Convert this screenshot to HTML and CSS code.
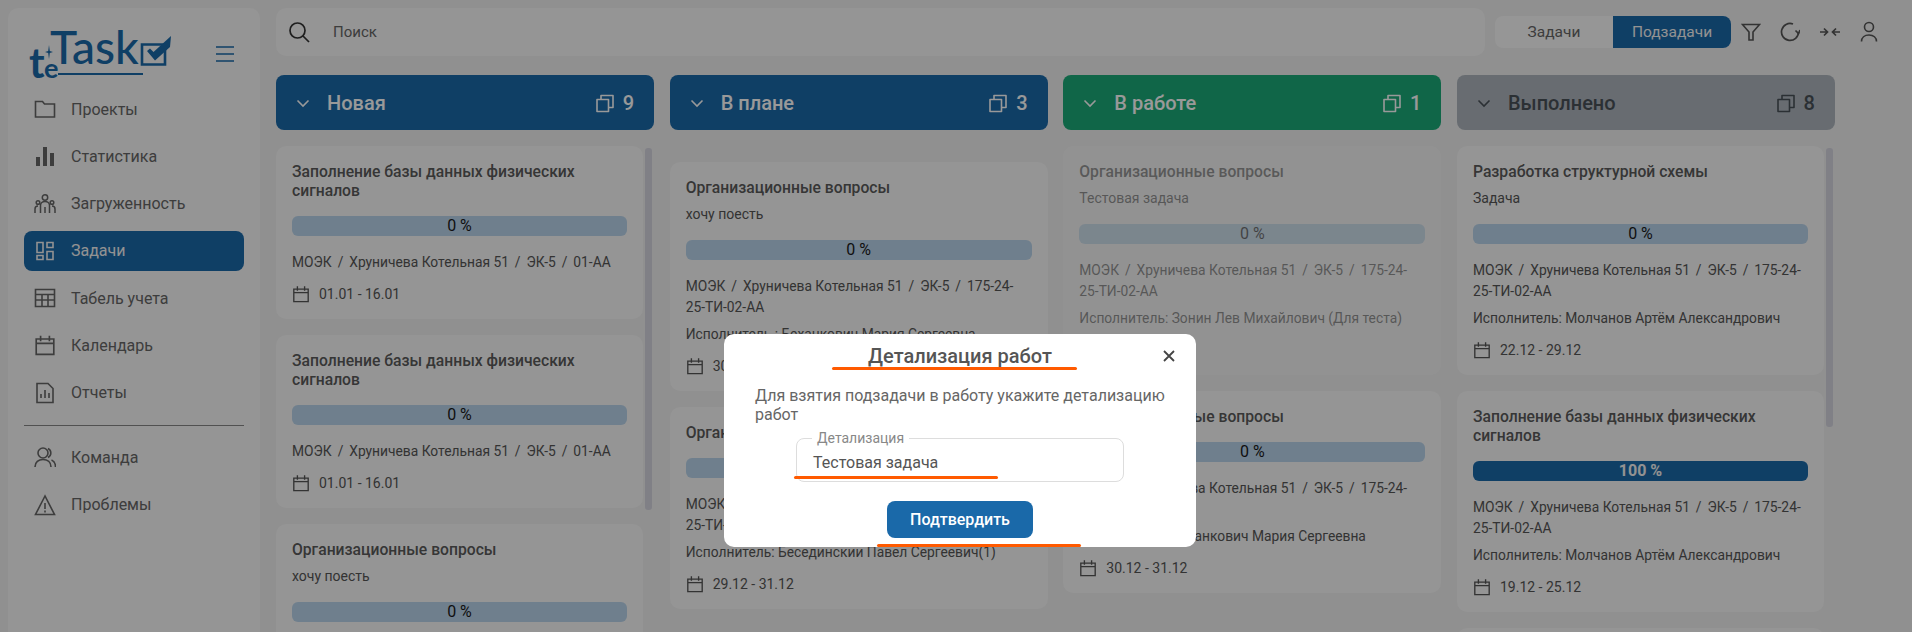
FILE: index.html
```html
<!DOCTYPE html>
<html lang="ru">
<head>
    <meta charset="UTF-8">
    <title>teTask</title>
    <link rel="stylesheet" href="styles.css">
</head>
<body>
<svg class="sprite" width="0" height="0">
    <symbol id="i-copy" viewBox="0 0 20 20"><path d="M2 6.500h11.500v12H2zM6 6.500V2.500h12v12h-4.500" fill="none" stroke="currentColor" stroke-width="1.600" stroke-linejoin="round"/></symbol>
    <symbol id="i-cal" viewBox="0 0 20 20"><path d="M2 4.500h16v14H2zM2 8.500h16M6 1.500v5M14 1.500v5" fill="none" stroke="currentColor" stroke-width="1.500"/></symbol>
    <symbol id="i-down" viewBox="0 0 14 14"><path d="M1.500 4.500 7 10l5.500-5.500" fill="none" stroke="currentColor" stroke-width="1.600"/></symbol>
</svg>

<div class="app">
    <aside class="sidebar">
        <div class="logo-row">
            <div class="logo">
                <span class="logo-t">t</span>
                <span class="logo-e">e</span>
                <span class="logo-task">Task</span>
                <svg class="logo-check" width="32" height="32" viewBox="0 0 32 32"><path d="M2 9.500h23v20H2z" fill="none" stroke="#1a69a9" stroke-width="2.600"/><path d="M7 16l3-2.500 3.500 3.500L31 1l-1 11-15 13.500z" fill="#1a69a9"/></svg>
                <svg class="logo-star" width="8" height="14" viewBox="0 0 8 14"><path d="M4 0l.8 6L8 7l-3.200 1L4 14l-.8-6L0 7l3.200-1z" fill="#1a69a9"/></svg>
            </div>
            <svg class="burger" width="18" height="16" viewBox="0 0 18 16"><path d="M0 1h18M0 8h18M0 15h18" stroke="#1a69a9" stroke-width="1.500"/></svg>
        </div>
        <nav class="nav">
            <a class="nav-item"><svg width="22" height="22" viewBox="0 0 22 22"><path d="M1.500 3.500h7l2 2.500h10v13h-19z" fill="none" stroke="currentColor" stroke-width="1.600"/></svg>Проекты</a>
            <a class="nav-item"><svg width="22" height="22" viewBox="0 0 22 22"><path d="M2 12h4v9H2zM9 2h4v19H9zM16 8h4v13h-4z" fill="currentColor"/></svg>Статистика</a>
            <a class="nav-item"><svg width="22" height="22" viewBox="0 0 22 22" fill="none" stroke="currentColor" stroke-width="1.500"><circle cx="11" cy="4.500" r="2.700"/><circle cx="4" cy="9.500" r="1.800"/><circle cx="18" cy="9.500" r="1.800"/><path d="M6.500 20v-7.500a4.500 4 0 0 1 9 0V20M11 14v6M1 20v-4a3 3 0 0 1 3-3M21 20v-4a3 3 0 0 0-3-3"/></svg>Загруженность</a>
            <a class="nav-item nav-item--active"><svg width="22" height="22" viewBox="0 0 22 22" fill="none" stroke="currentColor" stroke-width="1.600"><path d="M3 2.500h6v10H3zM13 2.500h6v5h-6zM13 11.500h6v8h-6zM3 15.500h6v4H3z"/></svg>Задачи</a>
            <a class="nav-item"><svg width="22" height="22" viewBox="0 0 22 22" fill="none" stroke="currentColor" stroke-width="1.600"><path d="M1.500 2.500h19v17h-19zM1.500 7.500h19M1.500 13h19M8 7.500v12M14 7.500v12"/></svg>Табель учета</a>
            <a class="nav-item"><svg width="22" height="22" viewBox="0 0 20 20"><use href="#i-cal"/></svg>Календарь</a>
            <a class="nav-item"><svg width="22" height="22" viewBox="0 0 22 22" fill="none" stroke="currentColor" stroke-width="1.600"><path d="M3 1.500h11l5 5v14H3z"/><path d="M7 16v-4M11 16V8M15 16v-5"/></svg>Отчеты</a>
            <hr class="nav-line">
            <a class="nav-item"><svg width="22" height="22" viewBox="0 0 22 22" fill="none" stroke="currentColor" stroke-width="1.600"><circle cx="9" cy="7" r="5"/><path d="M1 21c0-5 3.500-7.500 8-7.500s8 2.500 8 7.500M14 2.500a5 5 0 0 1 0 9M17.500 14c2.500 1 4 3.500 4 7"/></svg>Команда</a>
            <a class="nav-item"><svg width="22" height="22" viewBox="0 0 22 22" fill="none" stroke="currentColor" stroke-width="1.600"><path d="M11 2 1.500 20.500h19zM11 9v6M11 16.500v2"/></svg>Проблемы</a>
        </nav>
    </aside>

    <main class="main">
        <header class="topbar">
            <div class="search">
                <svg width="22" height="22" viewBox="0 0 22 22" fill="none" stroke="#333" stroke-width="1.700"><circle cx="9.500" cy="9.500" r="7.500"/><path d="m15 15 6 6"/></svg>
                <span>Поиск</span>
            </div>
            <div class="toggle">
                <span class="toggle-btn">Задачи</span>
                <span class="toggle-btn toggle-btn--on">Подзадачи</span>
            </div>
            <div class="tools">
                <svg width="20" height="20" viewBox="0 0 20 20" fill="none" stroke="currentColor" stroke-width="1.600"><path d="M1.500 2.500h17L12 10v8H8v-8z"/></svg>
                <svg width="20" height="20" viewBox="0 0 20 20" fill="none" stroke="currentColor" stroke-width="1.700"><path d="M18.500 10A8.500 8.500 0 1 1 13 2"/><path d="M15.500 8.500l3 3 1.500-3.500"/></svg>
                <svg width="22" height="12" viewBox="0 0 22 12" fill="none" stroke="currentColor" stroke-width="1.700"><path d="M1 6h7M5 2.500 8.500 6 5 9.500M21 6h-7M17 2.500 13.500 6l3.500 3.500"/></svg>
                <svg width="18" height="22" viewBox="0 0 18 22" fill="none" stroke="currentColor" stroke-width="1.600"><circle cx="9" cy="6" r="4.500"/><path d="M1.500 20.500c0-4 3-6.500 7.500-6.500s7.500 2.500 7.500 6.500"/></svg>
            </div>
        </header>

        <div class="board">
            <section class="col">
                <div class="col-head col-head--blue"><svg width="14" height="14"><use href="#i-down"/></svg><span class="col-name">Новая</span><svg class="col-copy" width="20" height="20"><use href="#i-copy"/></svg><span class="col-num">9</span></div>
                <div class="col-list col-list--scroll">
                    <article class="card"><h3>Заполнение базы данных физических сигналов</h3><div class="bar">0 %</div><p class="crumb">МОЭК <i>/</i> Хруничева Котельная 51 <i>/</i> ЭК-5 <i>/</i> 01-АА</p><p class="date"><svg width="18" height="18"><use href="#i-cal"/></svg>01.01 - 16.01</p></article>
                    <article class="card"><h3>Заполнение базы данных физических сигналов</h3><div class="bar">0 %</div><p class="crumb">МОЭК <i>/</i> Хруничева Котельная 51 <i>/</i> ЭК-5 <i>/</i> 01-АА</p><p class="date"><svg width="18" height="18"><use href="#i-cal"/></svg>01.01 - 16.01</p></article>
                    <article class="card"><h3>Организационные вопросы</h3><p class="sub">хочу поесть</p><div class="bar">0 %</div></article>
                    <div class="scrollbar scrollbar--long"></div>
                </div>
            </section>

            <section class="col">
                <div class="col-head col-head--blue"><svg width="14" height="14"><use href="#i-down"/></svg><span class="col-name">В плане</span><svg class="col-copy" width="20" height="20"><use href="#i-copy"/></svg><span class="col-num">3</span></div>
                <div class="col-list col-list--low">
                    <article class="card"><h3>Организационные вопросы</h3><p class="sub">хочу поесть</p><div class="bar">0 %</div><p class="crumb">МОЭК <i>/</i> Хруничева Котельная 51 <i>/</i> ЭК-5 <i>/</i> 175-24-<wbr>25-ТИ-02-АА</p><p class="who">Исполнитель : Беханкович Мария Сергеевна</p><p class="date"><svg width="18" height="18"><use href="#i-cal"/></svg>30.12 - 31.12</p></article>
                    <article class="card"><h3>Организационные вопросы</h3><div class="bar">0 %</div><p class="crumb">МОЭК <i>/</i> Хруничева Котельная 51 <i>/</i> ЭК-5 <i>/</i> 175-24-<wbr>25-ТИ-02-АА</p><p class="who">Исполнитель: Бесединскии Павел Сергеевич(1)</p><p class="date"><svg width="18" height="18"><use href="#i-cal"/></svg>29.12 - 31.12</p></article>
                </div>
            </section>

            <section class="col">
                <div class="col-head col-head--green"><svg width="14" height="14"><use href="#i-down"/></svg><span class="col-name">В работе</span><svg class="col-copy" width="20" height="20"><use href="#i-copy"/></svg><span class="col-num">1</span></div>
                <div class="col-list">
                    <article class="card card--faded"><h3>Организационные вопросы</h3><p class="sub">Тестовая задача</p><div class="bar">0 %</div><p class="crumb">МОЭК <i>/</i> Хруничева Котельная 51 <i>/</i> ЭК-5 <i>/</i> 175-24-<wbr>25-ТИ-02-АА</p><p class="who">Исполнитель: Зонин Лев Михайлович (Для теста)</p><p class="date"><svg width="18" height="18"><use href="#i-cal"/></svg>30.12 - 31.12</p></article>
                    <article class="card"><h3>Организационные вопросы</h3><div class="bar">0 %</div><p class="crumb">МОЭК <i>/</i> Хруничева Котельная 51 <i>/</i> ЭК-5 <i>/</i> 175-24-<wbr>25-ТИ-02-АА</p><p class="who">Исполнитель: Беханкович Мария Сергеевна</p><p class="date"><svg width="18" height="18"><use href="#i-cal"/></svg>30.12 - 31.12</p></article>
                </div>
            </section>

            <section class="col">
                <div class="col-head col-head--grey"><svg width="14" height="14"><use href="#i-down"/></svg><span class="col-name">Выполнено</span><svg class="col-copy" width="20" height="20"><use href="#i-copy"/></svg><span class="col-num">8</span></div>
                <div class="col-list col-list--scroll">
                    <article class="card"><h3>Разработка структурной схемы</h3><p class="sub">Задача</p><div class="bar">0 %</div><p class="crumb">МОЭК <i>/</i> Хруничева Котельная 51 <i>/</i> ЭК-5 <i>/</i> 175-24-<wbr>25-ТИ-02-АА</p><p class="who">Исполнитель: Молчанов Артём Александрович</p><p class="date"><svg width="18" height="18"><use href="#i-cal"/></svg>22.12 - 29.12</p></article>
                    <article class="card"><h3>Заполнение базы данных физических сигналов</h3><div class="bar bar--full">100 %</div><p class="crumb">МОЭК <i>/</i> Хруничева Котельная 51 <i>/</i> ЭК-5 <i>/</i> 175-24-<wbr>25-ТИ-02-АА</p><p class="who">Исполнитель: Молчанов Артём Александрович</p><p class="date"><svg width="18" height="18"><use href="#i-cal"/></svg>19.12 - 25.12</p></article>
                    <article class="card card--next"></article>
                    <div class="scrollbar"></div>
                </div>
            </section>
        </div>
    </main>
</div>

<div class="overlay">
    <div class="modal">
        <div class="modal-head">
            <h2>Детализация работ</h2>
            <svg class="modal-close" width="12" height="12" viewBox="0 0 12 12"><path d="M1 1l10 10M11 1 1 11" stroke="#444" stroke-width="1.800"/></svg>
        </div>
        <p class="modal-text">Для взятия подзадачи в работу укажите детализацию работ</p>
        <fieldset class="field">
            <legend>Детализация</legend>
            <span>Тестовая задача</span>
        </fieldset>
        <button class="confirm">Подтвердить</button>
        <i class="mark mark--title"></i>
        <i class="mark mark--field"></i>
        <i class="mark mark--button"></i>
    </div>
</div>
</body>
</html>
```

FILE: styles.css
```css
* {
    box-sizing: border-box;
}
html, body {
    height: 100%;
}
body {
    margin: 0;
    overflow: hidden;
    font-family: Roboto, "Liberation Sans", sans-serif;
    background: #f0f0f0;
    color: #555;
}
h2, h3, p {
    margin: 0;
}
.sprite {
    position: absolute;
}

.app {
    display: flex;
    height: 100vh;
    padding: 8px 0 0 8px;
    gap: 16px;
}
.sidebar {
    flex: 0 0 252px;
    background: #f8f8f8;
    border-radius: 10px 10px 0 0;
    padding: 0 16px;
}
.logo-row {
    display: flex;
    align-items: center;
    justify-content: space-between;
    height: 81px;
    padding: 11px 10px 0 5px;
}
.logo {
    position: relative;
    width: 143px;
    height: 48px;
    color: #1a69a9;
    font-family: Lato, sans-serif;
    line-height: 1;
}
.logo span {
    position: absolute;
}
.logo-t {
    left: 0;
    top: 11px;
    font-size: 42px;
    font-weight: 700;
}
.logo-e {
    left: 15px;
    top: 24px;
    font-size: 27px;
    font-weight: 700;
}
.logo-task {
    left: 21px;
    top: -6px;
    padding: 0 4px 0 0;
    font-size: 46px;
    font-weight: 500;
}
.logo-task::after {
    content: "";
    position: absolute;
    left: 8px;
    right: 0;
    bottom: -5px;
    height: 2px;
    background: #1a69a9;
}
.logo-check {
    position: absolute;
    left: 111px;
    top: 5px;
}
.logo-star {
    position: absolute;
    left: 16px;
    top: 15px;
}
.nav {
    display: flex;
    flex-direction: column;
    gap: 7.300px;
}
.nav-item {
    display: flex;
    align-items: center;
    gap: 15px;
    height: 40px;
    padding: 0 10px;
    font-size: 16px;
    color: #666;
    border-radius: 8px;
}
.nav-item--active {
    background: #1a69a9;
    color: #f4f4f4;
}
.nav-line {
    width: 100%;
    margin: 5px 0 4px;
    border: none;
    border-top: 1px solid #888;
}

.main {
    flex: 1;
    min-width: 0;
    display: flex;
    flex-direction: column;
}
.topbar {
    flex: none;
    display: flex;
    align-items: center;
    height: 48px;
    margin-bottom: 19px;
    padding-right: 28px;
}
.search {
    display: flex;
    align-items: center;
    gap: 23px;
    width: 1209px;
    height: 48px;
    padding-left: 12px;
    background: #f8f8f8;
    border-radius: 10px;
    font-size: 15px;
    color: #666;
}
.toggle {
    display: flex;
    height: 32px;
    margin-left: 10px;
    background: #fafafa;
    border-radius: 8px;
    overflow: hidden;
    font-size: 15.500px;
}
.toggle-btn {
    display: flex;
    align-items: center;
    justify-content: center;
    width: 118px;
    color: #666;
}
.toggle-btn--on {
    background: #1a69a9;
    color: #f4f4f4;
}
.tools {
    display: flex;
    align-items: center;
    gap: 19px;
    margin-left: 10px;
    color: #555;
}

.board {
    flex: 1;
    min-height: 0;
    display: flex;
    gap: 15.670px;
}
.col {
    flex: 0 0 378px;
    display: flex;
    flex-direction: column;
}
.col-head {
    flex: none;
    display: flex;
    align-items: center;
    height: 55px;
    padding: 0 20px;
    border-radius: 8px;
    color: #fff;
}
.col-head--blue {
    background: #1a69a9;
}
.col-head--green {
    background: #1baa78;
}
.col-head--grey {
    background: #adb5bd;
    color: #495057;
}
.col-name {
    flex: 1;
    margin-left: 17px;
    font-size: 20px;
    font-weight: 500;
}
.col-copy {
    margin-right: 8px;
}
.col-num {
    font-size: 20px;
    font-weight: 500;
}
.col-list {
    position: relative;
    flex: 1;
    min-height: 0;
    overflow: hidden;
    display: flex;
    flex-direction: column;
    gap: 16px;
    margin-top: 16px;
}
.col-list--scroll {
    padding-right: 11px;
}
.col-list--low {
    margin-top: 32px;
}
.card {
    flex: none;
    padding: 16px 16px 14px;
    background: #f8f8f8;
    border-radius: 10px;
}
.card--faded {
    opacity: 0.6;
}
.card--next {
    height: 60px;
}
.card h3 {
    font-size: 15.700px;
    font-weight: 500;
    line-height: 19px;
    color: #5a5a5a;
}
.sub {
    margin-top: 7px;
    font-size: 14px;
    line-height: 20px;
}
.bar {
    height: 20px;
    margin: 16px 0;
    background: #b9d4eb;
    border-radius: 6px;
    color: #1a1a1a;
    font-size: 16px;
    line-height: 20px;
    text-align: center;
}
.bar--full {
    background: #1a69a9;
    color: #f4f4f4;
    font-weight: 700;
}
.crumb {
    font-size: 13.800px;
    line-height: 21px;
}
.crumb i {
    margin: 0 2.500px;
    font-style: normal;
}
.who {
    margin-top: 6px;
    font-size: 13.800px;
    line-height: 21px;
}
.date {
    display: flex;
    align-items: center;
    gap: 9px;
    margin-top: 10px;
    font-size: 14px;
    line-height: 22px;
}
.scrollbar {
    position: absolute;
    top: 2px;
    right: 2px;
    width: 7px;
    height: 279px;
    background: #d5d5e0;
    border-radius: 3px;
}
.scrollbar--long {
    height: 362px;
}

.overlay {
    position: fixed;
    inset: 0;
    padding: 334px 0 0 724px;
    background: rgba(0, 0, 0, 0.4);
}
.modal {
    position: relative;
    width: 472px;
    height: 213px;
    padding: 0 20px 0 31px;
    background: #fff;
    border-radius: 10px;
    text-align: center;
}
.modal-head {
    display: flex;
    align-items: center;
    justify-content: center;
    height: 43px;
    margin-right: 11px;
}
.modal-head h2 {
    font-size: 20px;
    font-weight: 500;
    color: #555;
}
.modal-close {
    position: absolute;
    top: 16px;
    right: 21px;
}
.modal-text {
    margin-top: 9px;
    font-size: 16px;
    line-height: 19px;
    color: #666;
    text-align: left;
}
.field {
    display: block;
    width: 328px;
    height: 52px;
    margin: 6px 0 0 41px;
    padding: 0 16px;
    border: 1px solid #ddd;
    border-radius: 8px;
    font-size: 16px;
    color: #555;
    text-align: left;
}
.field span {
    display: block;
    margin-top: 7px;
}
.field legend {
    padding: 0 5px;
    margin-left: -1px;
    font-size: 14px;
    color: #888;
}
.confirm {
    display: block;
    width: 146px;
    height: 37px;
    margin: 19px 0 0 132px;
    border: none;
    border-radius: 8px;
    background: #1a69a9;
    color: #fff;
    font: 500 16px Roboto, sans-serif;
}
.mark {
    position: absolute;
    height: 3px;
    background: #ff5a00;
    border-radius: 2px;
}
.mark--title {
    top: 33px;
    left: 108px;
    width: 245px;
}
.mark--field {
    top: 142px;
    left: 70px;
    width: 204px;
}
.mark--button {
    top: 210px;
    left: 153px;
    width: 204px;
}
```
